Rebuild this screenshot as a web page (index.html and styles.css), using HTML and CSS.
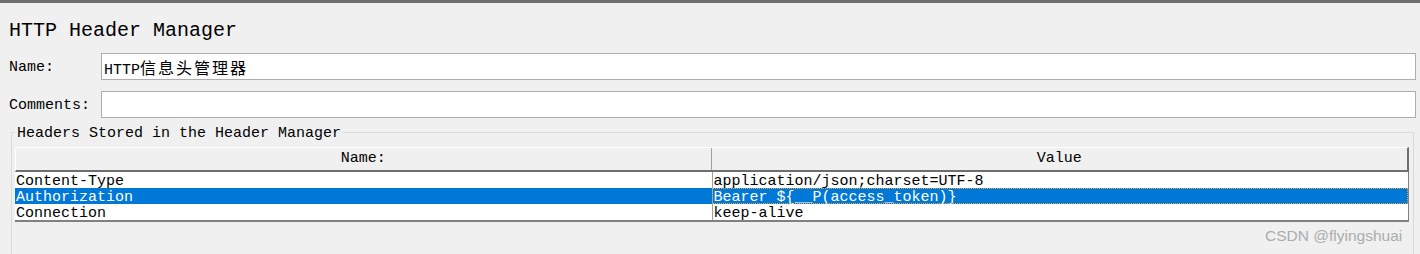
FILE: index.html
```html
<!DOCTYPE html>
<html lang="en">
<head>
  <meta charset="UTF-8">
  <title>HTTP Header Manager</title>
  <link rel="stylesheet" href="styles.css">
</head>
<body>
  <div class="panel">
    <h1 class="title">HTTP Header Manager</h1>

    <div class="form-row">
      <label class="form-label">Name:</label>
      <div class="field">HTTP<span class="cjk">信息头管理器</span></div>
    </div>
    <div class="form-row">
      <label class="form-label">Comments:</label>
      <div class="field"></div>
    </div>

    <fieldset class="group">
      <legend>Headers Stored in the Header Manager</legend>
      <div class="table">
        <div class="table-head">
          <div class="th">Name:</div>
          <div class="th">Value</div>
        </div>
        <div class="table-body">
          <div class="tr">
            <div class="td">Content-Type</div>
            <div class="td">application/json;charset=UTF-8</div>
          </div>
          <div class="tr selected">
            <div class="td">Authorization</div>
            <div class="td focus">Bearer ${__P(access_token)}</div>
          </div>
          <div class="tr">
            <div class="td">Connection</div>
            <div class="td">keep-alive</div>
          </div>
        </div>
      </div>
    </fieldset>
  </div>

  <div class="watermark">CSDN @flyingshuai</div>
</body>
</html>
```

FILE: styles.css
```css
html, body {
  margin: 0;
  height: 100%;
}
body {
  background: #f0f0f0;
  font-family: 'Liberation Mono', 'Noto Sans CJK SC', monospace;
  font-size: 15px;
  color: #000;
  overflow: hidden;
}
.panel {
  border-top: 3px solid #6e6e6e;
  height: 100%;
  box-sizing: border-box;
}
.title {
  margin: 16px 0 0 9px;
  font-size: 20px;
  font-weight: normal;
  line-height: 24px;
  height: 24px;
}
.form-row {
  display: grid;
  grid-template-columns: 92px 1fr;
  align-items: center;
  margin: 10px 4px 0 9px;
}
.form-row + .form-row {
  margin-top: 11px;
}
.form-label {
  line-height: 20px;
  padding-top: 3px;
}
.field {
  height: 27px;
  box-sizing: border-box;
  background: #fff;
  border: 1px solid #adadad;
  padding: 2px 2px 0 2px;
  line-height: 23px;
  white-space: nowrap;
}
.cjk {
  font-family: 'Noto Sans CJK SC', sans-serif;
  font-size: 16px;
  letter-spacing: 2px;
}
.group {
  margin: 4px 6px 0 11px;
  padding: 4px 4px 40px 3px;
  border: 1px solid #dadada;
  min-width: 0;
}
.group legend {
  padding: 3px 2px 0 2px;
  line-height: 18px;
}
.table-head {
  display: grid;
  grid-template-columns: 1fr 1fr;
  height: 25px;
  box-sizing: border-box;
  border-top: 1px solid #fff;
  border-left: 1px solid #fff;
  border-right: 2px solid #6e6e6e;
  border-bottom: 2px solid #6e6e6e;
}
.th {
  text-align: center;
  line-height: 22px;
  border-right: 1px solid #a0a0a0;
}
.th:last-child {
  border-right: none;
}
.table-body {
  background: #fff;
  border-right: 1px solid #808080;
  border-bottom: 2px solid #808080;
}
.tr {
  display: grid;
  grid-template-columns: 1fr 1fr;
  grid-template-rows: 16px;
  height: 16px;
  line-height: 20px;
  background: #fff;
}
.td {
  padding-left: 1px;
  white-space: nowrap;
  position: relative;
}
.td + .td {
  border-left: 1px solid #a0a0a0;
}
.tr.selected {
  background: #0078d7;
  color: #fff;
}
.tr.selected .focus {
  outline: 1px dotted #e6a04a;
  outline-offset: -1px;
}
.watermark {
  position: absolute;
  left: 1265px;
  top: 226px;
  font-family: 'Liberation Sans', sans-serif;
  font-size: 15.5px;
  line-height: 20px;
  color: #acacac;
}
```
